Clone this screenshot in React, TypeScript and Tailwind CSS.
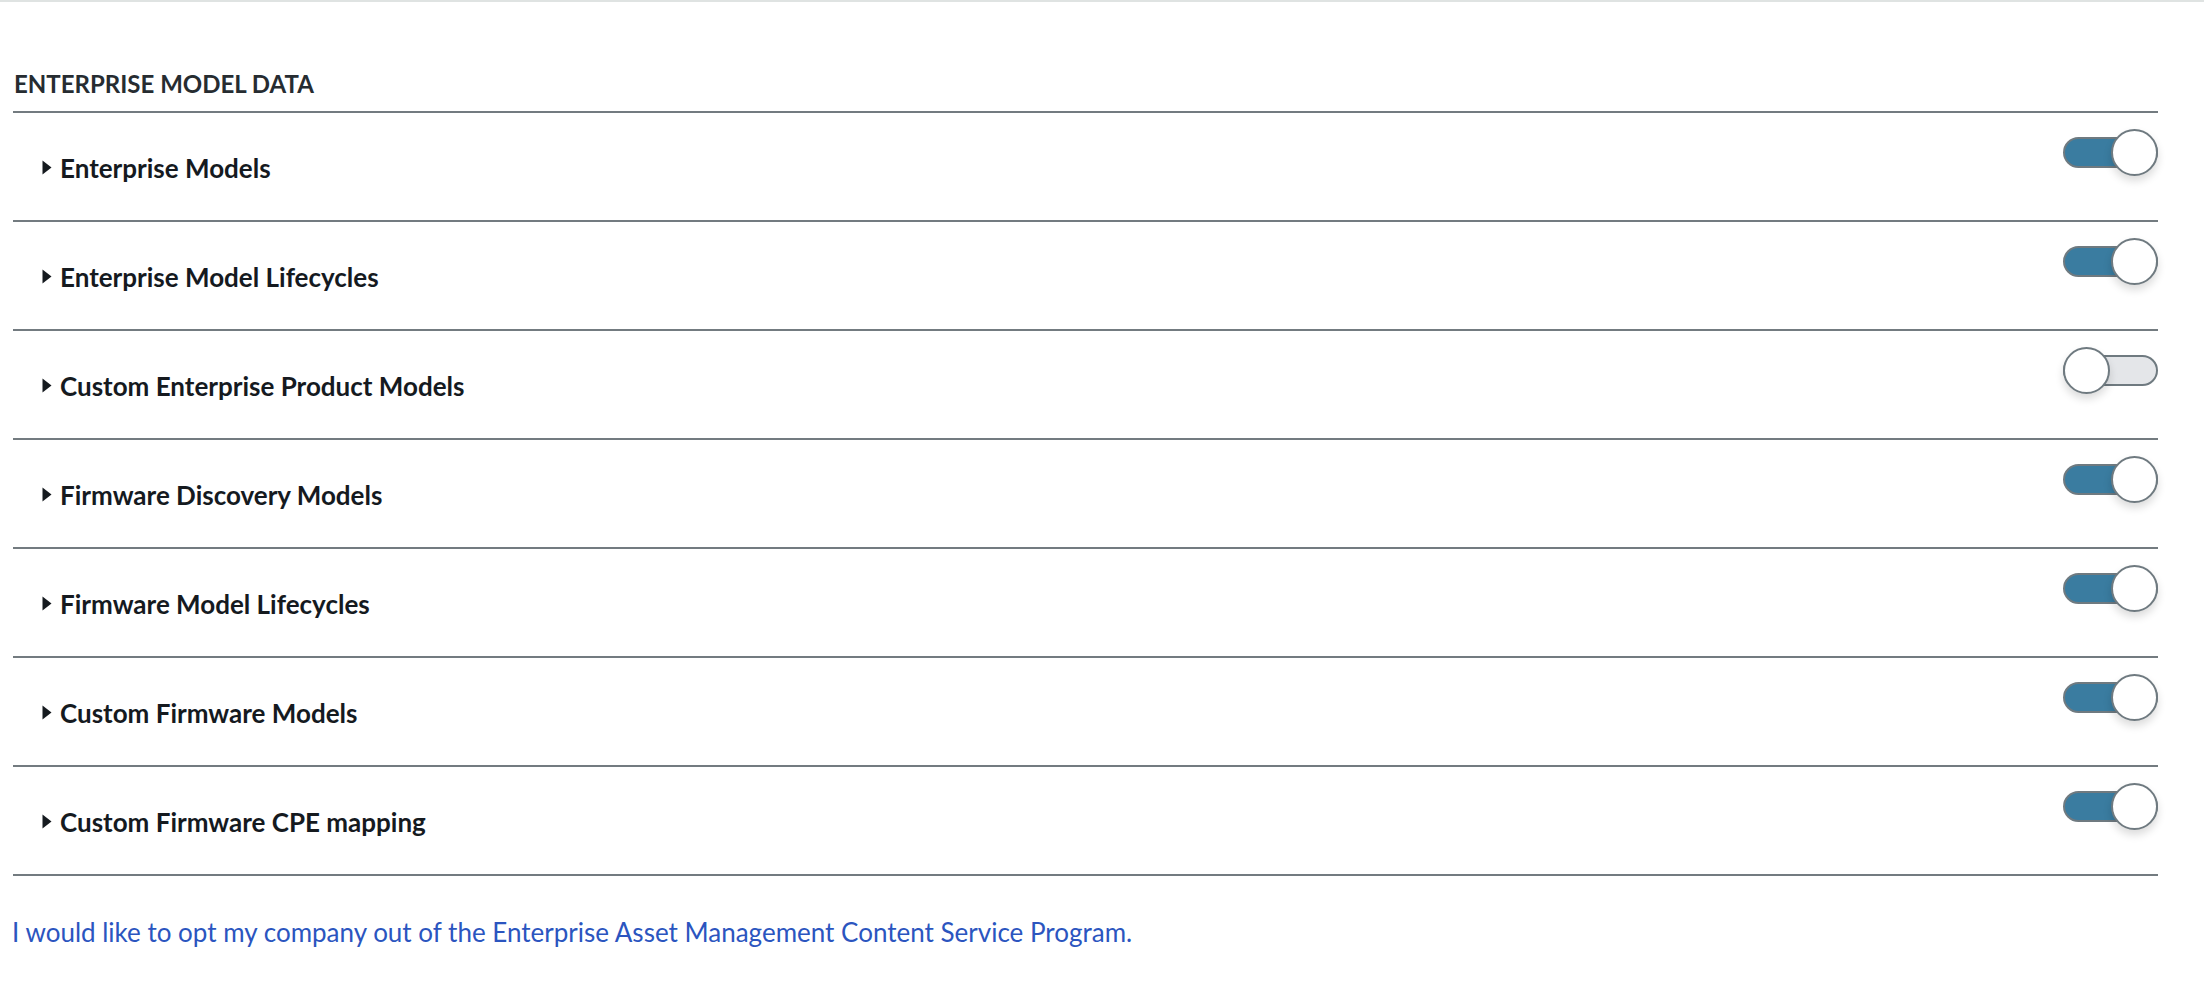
import { useState } from "react";

const rows = [
  { label: "Enterprise Models", on: true },
  { label: "Enterprise Model Lifecycles", on: true },
  { label: "Custom Enterprise Product Models", on: false },
  { label: "Firmware Discovery Models", on: true },
  { label: "Firmware Model Lifecycles", on: true },
  { label: "Custom Firmware Models", on: true },
  { label: "Custom Firmware CPE mapping", on: true },
];

function Toggle({ on, onChange }: { on: boolean; onChange: () => void }) {
  return (
    <button
      type="button"
      role="switch"
      aria-checked={on}
      onClick={onChange}
      className="relative h-[47px] w-[95px] shrink-0"
    >
      <span
        className={`absolute left-0 top-[8px] h-[31px] w-full rounded-full border-2 border-[#6f7a80] ${
          on ? "bg-[#3a7ca0]" : "bg-[#e4e6e9]"
        }`}
      />
      <span
        className={`absolute top-0 h-[47px] w-[47px] rounded-full border-2 border-[#6f7a80] bg-white shadow-[0_5px_8px_rgba(0,0,0,0.14)] ${
          on ? "right-0" : "left-0"
        }`}
      />
    </button>
  );
}

function Caret() {
  return (
    <svg width="10" height="15" viewBox="0 0 10 15" className="shrink-0">
      <path d="M0.5 0.5 L9.5 7.5 L0.5 14.5 Z" fill="#151a1f" />
    </svg>
  );
}

export default function App() {
  const [state, setState] = useState(rows.map((r) => r.on));

  return (
    <main className="min-h-screen border-t-2 border-[#dfe3e2] bg-white font-['Lato',_'Liberation_Sans',_sans-serif]">
      <section className="ml-[13px] mr-[46px] pt-[66px]">
        <h2 className="border-b-2 border-[#737b80] pb-[11px] pl-px text-[24px] font-bold leading-8 text-[#262c31]">
          ENTERPRISE MODEL DATA
        </h2>
        {rows.map((row, i) => (
          <div
            key={row.label}
            className="flex h-[109px] items-start justify-between border-b-2 border-[#737b80]"
          >
            <div className="flex h-[107px] items-center gap-[8px] pl-[29px] pt-[2px]">
              <Caret />
              <span className="text-[26px] font-bold leading-8 text-[#151a1f]">
                {row.label}
              </span>
            </div>
            <div className="pt-4">
              <Toggle
                on={state[i]}
                onChange={() =>
                  setState((s) => s.map((v, j) => (j === i ? !v : v)))
                }
              />
            </div>
          </div>
        ))}
      </section>
      <p className="ml-[12px] mt-[40px] text-[26px] leading-8 text-[#2b55bf]">
        <a href="#" className="cursor-pointer">
          I would like to opt my company out of the Enterprise Asset Management
          Content Service Program.
        </a>
      </p>
    </main>
  );
}
